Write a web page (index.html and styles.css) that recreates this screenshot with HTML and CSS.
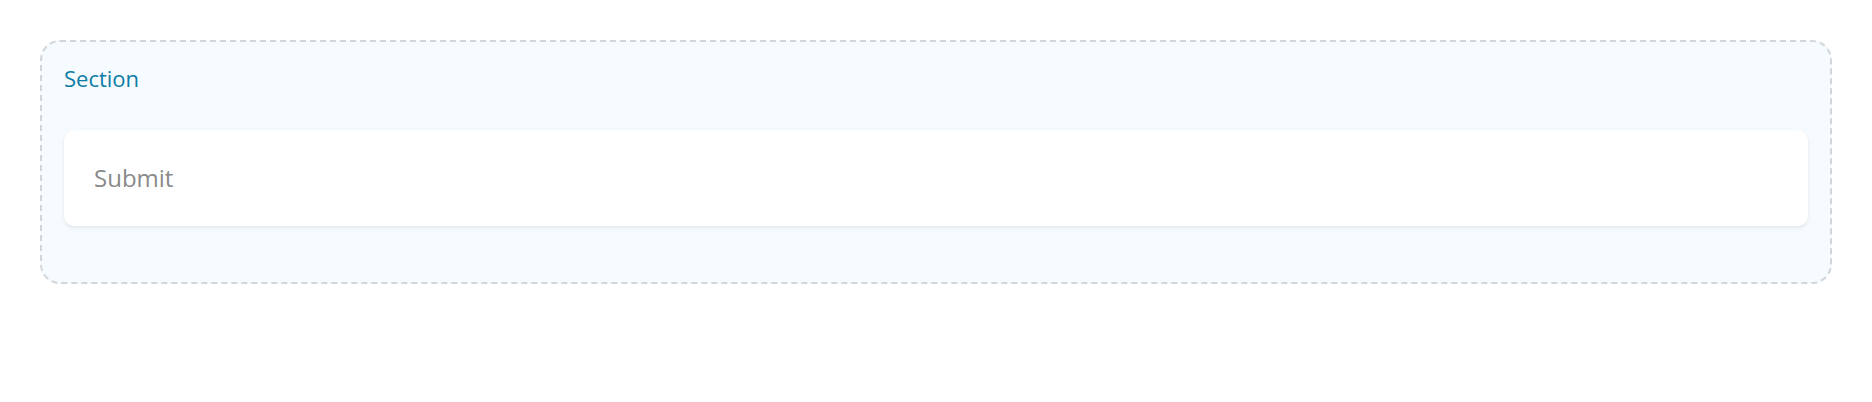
FILE: index.html
```html
<!DOCTYPE html>
<html lang="en">
<head>
<meta charset="utf-8">
<title>Section</title>
<link rel="stylesheet" href="styles.css">
</head>
<body>
  <section class="section-box">
    <h2 class="section-title">Section</h2>
    <div class="card">
      <span class="card-label">Submit</span>
    </div>
  </section>
</body>
</html>
```
FILE: styles.css
```css
html, body {
  margin: 0;
  background: #ffffff;
}
body {
  padding: 40px;
  font-family: "Open Sans", "Noto Sans", sans-serif;
}
.section-box {
  background: #f5fbfe;
  border: 2px dashed #d3d5d7;
  border-radius: 20px;
  padding: 20px 22px 56px;
}
.section-title {
  margin: 0 0 35px;
  font-size: 22px;
  font-weight: 400;
  line-height: 33px;
  color: #0e7ba6;
}
.card {
  background: #ffffff;
  border-radius: 10px;
  padding: 30px;
  box-shadow: 0 2px 4px rgba(0, 0, 0, 0.08), 0 0 1px rgba(0, 0, 0, 0.04);
}
.card-label {
  display: block;
  font-size: 24px;
  line-height: 36px;
  color: #8a8a8a;
}
```
